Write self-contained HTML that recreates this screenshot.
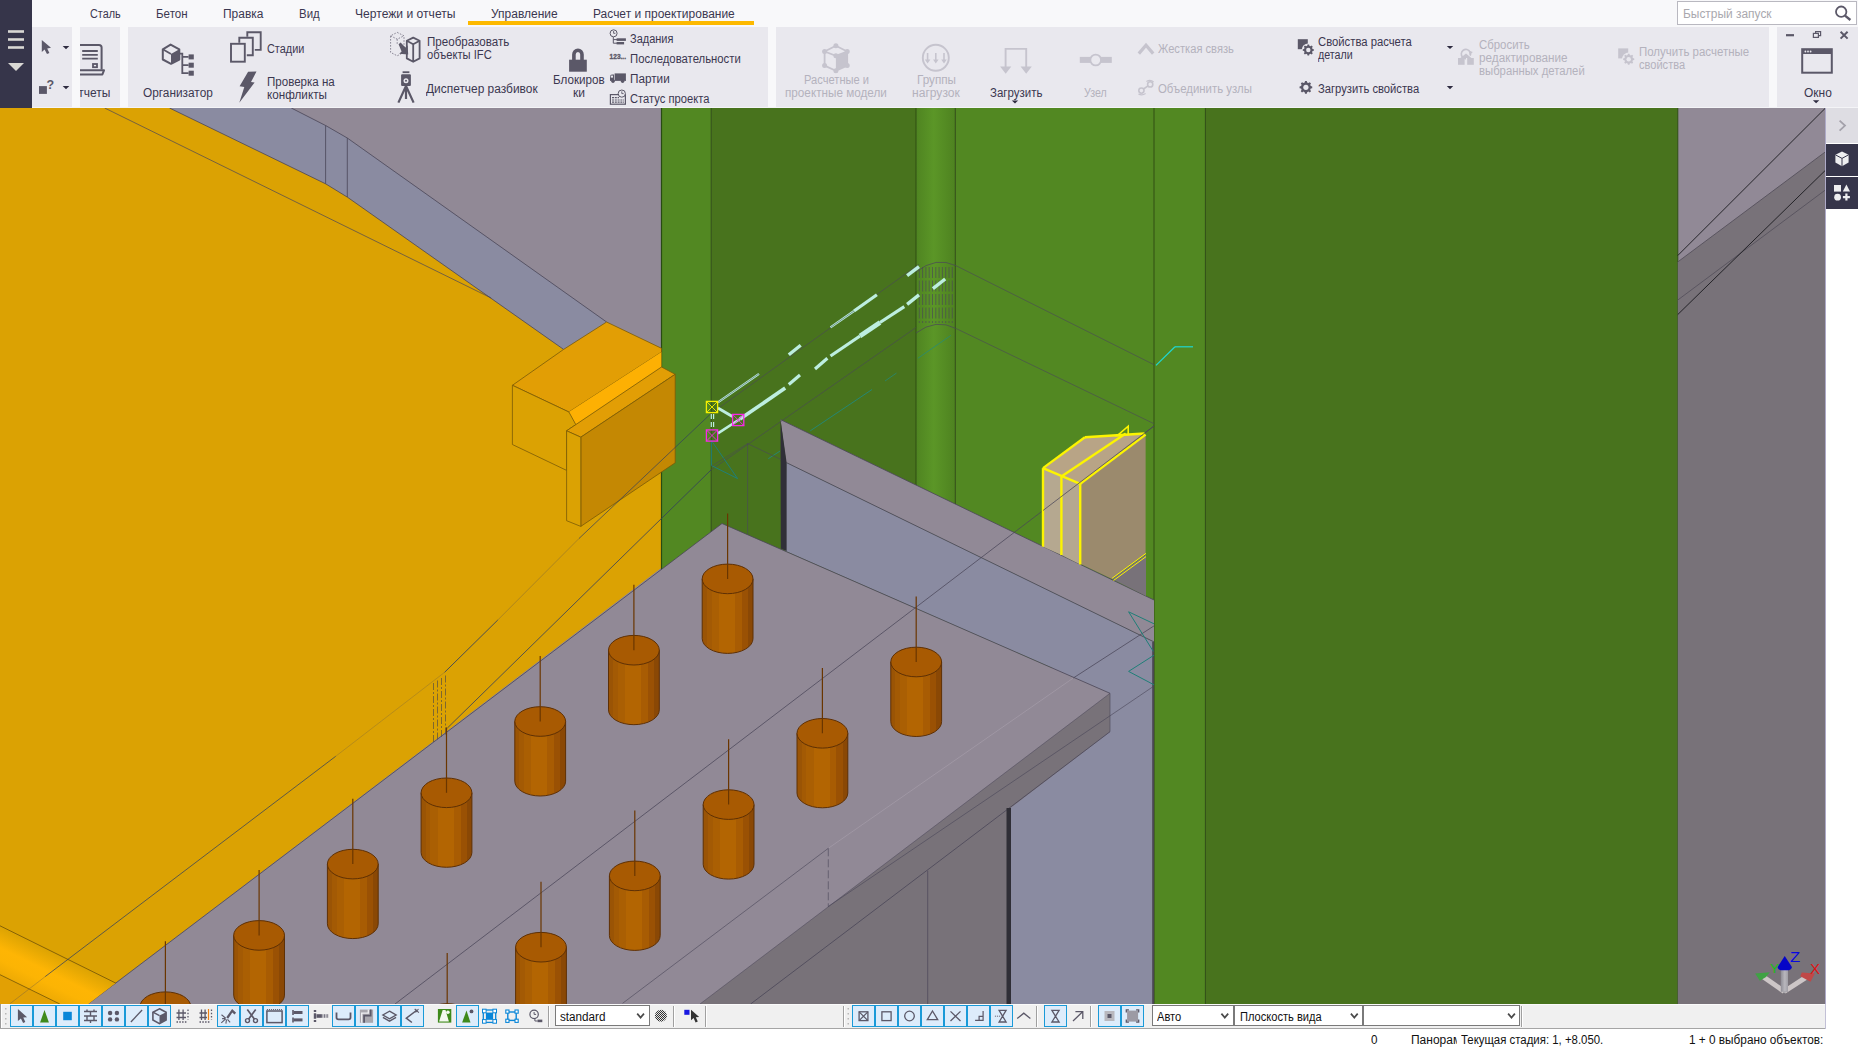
<!DOCTYPE html>
<html lang="ru"><head><meta charset="utf-8"><title>Tekla Structures</title>
<style>
html,body{margin:0;padding:0;background:#fff;}
body{width:1858px;height:1050px;position:relative;overflow:hidden;font-family:"Liberation Sans",sans-serif;font-size:12px;}
.t{position:absolute;white-space:nowrap;line-height:1.2;transform-origin:0 50%;}
.a{position:absolute;}
#tabs{left:0;top:0;width:1858px;height:27px;background:#f8f8fa;}
.rg{position:absolute;top:27px;height:80px;background:#e9e8ee;}
#strip{left:0;top:0;width:32px;height:108px;background:#36354a;}
#under{left:468px;top:21px;width:285.8px;height:4px;background:#fdb900;}
#search{left:1677px;top:1px;width:180px;height:24px;background:#fff;border:1px solid #b9b8c0;box-sizing:border-box;}
#ribline{left:0;top:107px;width:1858px;height:1px;background:#f4f4f7;}
#rp1{left:1826px;top:108px;width:32px;height:35px;background:#dedde3;}
#rp2{left:1826px;top:143.5px;width:32px;height:32px;background:#36354a;}
#rp3{left:1826px;top:176.5px;width:32px;height:32px;background:#36354a;}
#tbar{left:0;top:1004px;width:1826px;height:24px;background:#f0f0f0;border-bottom:1px solid #a5a5a5;}
.sel{position:absolute;top:1005px;height:21px;background:#fff;border:1px solid #7a7a7a;box-sizing:border-box;}
.b{position:absolute;top:1005px;height:22px;box-sizing:border-box;background:#ddecfb;border:1px solid #1a9ad8;}
</style></head><body>
<div id="tabs" class="a"></div>
<div class="rg" style="left:32px;width:40px"></div>
<div class="rg" style="left:80px;width:40px"></div>
<div class="rg" style="left:128px;width:640px"></div>
<div class="rg" style="left:776px;width:993px"></div>
<div class="rg" style="left:1777px;width:81px"></div>
<div class="a" style="left:72px;top:27px;width:8px;height:80px;background:#f8f8fa"></div>
<div class="a" style="left:120px;top:27px;width:8px;height:80px;background:#f8f8fa"></div>
<div class="a" style="left:768px;top:27px;width:8px;height:80px;background:#f8f8fa"></div>
<div class="a" style="left:1769px;top:27px;width:8px;height:80px;background:#f8f8fa"></div>
<div id="ribline" class="a"></div>
<div id="strip" class="a"></div>
<div id="under" class="a"></div>
<div id="search" class="a"></div>
<div id="rp1" class="a"></div><div id="rp2" class="a"></div><div id="rp3" class="a"></div>
<svg class="a" style="left:0;top:0" width="1858" height="1050" viewBox="0 0 1858 1050">
<defs>
<linearGradient id="gcyl" x1="0" x2="1" y1="0" y2="0"><stop offset="0" stop-color="#4f8421"/><stop offset="0.45" stop-color="#5b9627"/><stop offset="1" stop-color="#4e8220"/></linearGradient>
<linearGradient id="stud" x1="0" x2="1" y1="0" y2="0"><stop offset="0" stop-color="#9a5405"/><stop offset="0.092" stop-color="#9a5405"/><stop offset="0.092" stop-color="#a35a04"/><stop offset="0.184" stop-color="#a35a04"/><stop offset="0.184" stop-color="#aa5f03"/><stop offset="0.327" stop-color="#aa5f03"/><stop offset="0.327" stop-color="#b36502"/><stop offset="0.643" stop-color="#b36502"/><stop offset="0.643" stop-color="#a85c03"/><stop offset="0.776" stop-color="#a85c03"/><stop offset="0.776" stop-color="#9a5104"/><stop offset="0.898" stop-color="#9a5104"/><stop offset="0.898" stop-color="#8a4805"/><stop offset="1" stop-color="#8a4805"/></linearGradient>
<linearGradient id="yband" gradientUnits="userSpaceOnUse" x1="0" y1="925.8" x2="-19.4" y2="965.1"><stop offset="0" stop-color="#dca303"/><stop offset="0.18" stop-color="#e9aa03"/><stop offset="0.45" stop-color="#feb504"/><stop offset="0.7" stop-color="#fcb404"/><stop offset="1" stop-color="#eeaa04"/></linearGradient>
<linearGradient id="zsh" x1="0" x2="1" y1="0" y2="0"><stop offset="0" stop-color="#8f8d96"/><stop offset="0.55" stop-color="#b9b7bd"/><stop offset="1" stop-color="#a09ea6"/></linearGradient>
<clipPath id="sc"><rect x="0" y="108" width="1826" height="896"/></clipPath>
</defs>
<g clip-path="url(#sc)" shape-rendering="auto">
<rect x="0" y="108" width="1826" height="896" fill="#918996"/>
<polygon points="169.5,108.0 291.3,108.0 325.6,125.5 347.3,138.0 606.6,322.0 563.6,349.4 347.3,197.1 325.6,183.8" fill="#8a8ba1" />
<polygon points="0.0,108.0 169.5,108.0 325.6,183.8 347.3,197.1 563.6,349.4 661.5,349.4 661.5,567.8 88.1,1004.0 0.0,1004.0" fill="#dba203" />
<line x1="169.5" y1="108.0" x2="325.6" y2="183.8" stroke="#4a4658" stroke-width="1" stroke-opacity="0.8" />
<line x1="325.6" y1="183.8" x2="347.3" y2="197.1" stroke="#4a4658" stroke-width="1" stroke-opacity="0.8" />
<line x1="347.3" y1="197.1" x2="563.6" y2="349.4" stroke="#4a4658" stroke-width="1" stroke-opacity="0.8" />
<line x1="291.3" y1="108.0" x2="325.6" y2="125.5" stroke="#4a4658" stroke-width="1" stroke-opacity="0.8" />
<line x1="325.6" y1="125.5" x2="347.3" y2="138.0" stroke="#4a4658" stroke-width="1" stroke-opacity="0.8" />
<line x1="347.3" y1="138.0" x2="606.6" y2="322.0" stroke="#4a4658" stroke-width="1" stroke-opacity="0.8" />
<line x1="325.6" y1="125.5" x2="325.6" y2="183.8" stroke="#4a4658" stroke-width="1" stroke-opacity="0.8" />
<line x1="347.3" y1="138.0" x2="347.3" y2="197.1" stroke="#4a4658" stroke-width="1" stroke-opacity="0.8" />
<line x1="104.7" y1="108.0" x2="491.2" y2="298.0" stroke="#4a4658" stroke-width="1" stroke-opacity="0.7" />
<rect x="661.5" y="108" width="49.7" height="500" fill="#528822"/>
<rect x="711.2" y="108" width="205" height="500" fill="#48731d"/>
<rect x="916" y="108" width="39.3" height="560" fill="url(#gcyl)"/>
<rect x="955.3" y="108" width="199" height="560" fill="#528822"/>
<rect x="1154" y="108" width="51.4" height="896" fill="#528822"/>
<rect x="1205.4" y="108" width="472.4" height="896" fill="#48731d"/>
<line x1="711.2" y1="108.0" x2="711.2" y2="600.0" stroke="#2c4a12" stroke-width="1" stroke-opacity="0.9" />
<line x1="916.0" y1="108.0" x2="916.0" y2="600.0" stroke="#2c4a12" stroke-width="1" stroke-opacity="0.9" />
<line x1="955.3" y1="108.0" x2="955.3" y2="600.0" stroke="#2c4a12" stroke-width="1" stroke-opacity="0.9" />
<line x1="1154.0" y1="108.0" x2="1154.0" y2="1004.0" stroke="#2c4a12" stroke-width="1" stroke-opacity="0.9" />
<line x1="1205.4" y1="108.0" x2="1205.4" y2="1004.0" stroke="#2c4a12" stroke-width="1" stroke-opacity="0.9" />
<line x1="661.5" y1="108.0" x2="661.5" y2="570.0" stroke="#24480f" stroke-width="1.2" stroke-opacity="0.95" />
<line x1="1677.8" y1="108.0" x2="1677.8" y2="1004.0" stroke="#2c4a12" stroke-width="1" stroke-opacity="0.9" />
<polygon points="1677.8,261.9 1826.0,151.4 1826.0,1004.0 1677.8,1004.0" fill="#787279" />
<line x1="1677.8" y1="255.5" x2="1826.0" y2="107.5" stroke="#1a1a1e" stroke-width="0.9" />
<line x1="1677.8" y1="261.9" x2="1826.0" y2="151.4" stroke="#5a5560" stroke-width="1" />
<line x1="1677.8" y1="300.0" x2="1826.0" y2="189.5" stroke="#5a5560" stroke-width="1" />
<line x1="1677.8" y1="314.5" x2="1826.0" y2="169.7" stroke="#1a1a1e" stroke-width="0.9" />
<line x1="1825.5" y1="108.0" x2="1825.5" y2="1004.0" stroke="#aeaac8" stroke-width="1" />
<polygon points="780.5,419.6 1154.0,600.0 1154.0,641.9 786.2,462.5" fill="#918996" />
<polygon points="786.2,462.5 1154.0,641.9 1154.0,1004.0 1010.0,1004.0 1010.0,808.3 1110.0,731.7 1110.0,693.3 785.4,551.0" fill="#8a8ba1" />
<polygon points="780.5,419.6 786.6,462.5 786.6,551.0 780.8,548.4" fill="#302f38" />
<line x1="780.5" y1="419.6" x2="1154.0" y2="600.0" stroke="#4a4658" stroke-width="1" stroke-opacity="0.8" />
<line x1="786.2" y1="462.5" x2="1154.0" y2="641.9" stroke="#4a4658" stroke-width="1" stroke-opacity="0.8" />
<polygon points="722.0,523.5 1110.0,693.3 780.0,943.1 700.0,1004.0 88.1,1004.0" fill="#918996" />
<polygon points="1110.0,693.3 1110.0,731.7 1010.0,808.3 1010.0,1004.0 700.0,1004.0" fill="#787279" />
<line x1="722.0" y1="523.5" x2="1110.0" y2="693.3" stroke="#4a4658" stroke-width="1" stroke-opacity="0.8" />
<line x1="1110.0" y1="693.3" x2="1110.0" y2="731.7" stroke="#4a4658" stroke-width="1" stroke-opacity="0.6" />
<line x1="1110.0" y1="693.3" x2="700.0" y2="1004.0" stroke="#4a4658" stroke-width="1" stroke-opacity="0.5" />
<line x1="1110.0" y1="731.7" x2="750.6" y2="1004.0" stroke="#4a4658" stroke-width="1" stroke-opacity="0.8" />
<line x1="88.1" y1="1004.0" x2="722.0" y2="523.5" stroke="#4a4658" stroke-width="1" stroke-opacity="0.8" />
<line x1="927.7" y1="870.7" x2="927.7" y2="1004.0" stroke="#4a4658" stroke-width="1" stroke-opacity="0.7" />
<rect x="1006.5" y="808" width="4.5" height="196" fill="#2f2e36"/>
<line x1="1154.0" y1="426.0" x2="395.0" y2="1004.0" stroke="#4a4658" stroke-width="1" stroke-opacity="0.75" />
<line x1="1073.3" y1="678.0" x2="828.3" y2="848.3" stroke="#a59da9" stroke-width="1" stroke-opacity="0.7" />
<line x1="1154.3" y1="625.7" x2="1073.3" y2="678.0" stroke="#4a4658" stroke-width="1" stroke-opacity="0.75" />
<rect x="1152.2" y="642" width="2" height="362" fill="#4a4852"/>
<line x1="828.3" y1="848.3" x2="622.6" y2="1003.3" stroke="#4a4658" stroke-width="1" stroke-opacity="0.6" />
<line x1="828.3" y1="848.3" x2="828.3" y2="906.7" stroke="#4a4658" stroke-width="1" stroke-opacity="0.6" stroke-dasharray="8 3"/>
<line x1="1153.0" y1="686.7" x2="828.0" y2="906.7" stroke="#4a4658" stroke-width="1" stroke-opacity="0.6" />
<polygon points="563.6,349.4 606.6,322.0 661.5,348.3 661.5,352.1 568.9,412.0 512.4,385.3" fill="#e29e05" stroke="#7a5a08" stroke-width="0.8" />
<polygon points="568.9,412.0 661.5,352.1 661.5,367.0 575.8,424.6" fill="#fdb003" />
<polygon points="512.4,385.3 568.9,412.0 575.8,424.6 566.6,430.8 566.6,470.4 512.4,444.5" fill="#dba203" stroke="#7a5a08" stroke-width="0.8" />
<polygon points="566.6,430.8 661.5,367.0 675.2,374.3 580.8,437.2" fill="#e29e05" stroke="#7a5a08" stroke-width="0.8" />
<polygon points="580.8,437.2 675.2,374.3 675.2,462.8 580.8,526.4" fill="#c48803" stroke="#7a5a08" stroke-width="0.8" />
<polygon points="566.6,430.8 580.8,437.2 580.8,526.4 566.6,520.7" fill="#dba203" stroke="#7a5a08" stroke-width="0.8" />
<path d="M702.2,578.9 L702.2,638.6 A25.4,14.8 0 0 0 753.0,638.6 L753.0,578.9 Z" fill="url(#stud)" stroke="#5e3005" stroke-width="1"/>
<ellipse cx="727.6" cy="578.9" rx="25.4" ry="14.8" fill="#a85a02" stroke="#5e3005" stroke-width="1"/>
<line x1="727.6" y1="513.5" x2="727.6" y2="578.9" stroke="#6a3600" stroke-width="1.2" />
<path d="M608.5,650.2 L608.5,709.9 A25.4,14.8 0 0 0 659.3,709.9 L659.3,650.2 Z" fill="url(#stud)" stroke="#5e3005" stroke-width="1"/>
<ellipse cx="633.9" cy="650.2" rx="25.4" ry="14.8" fill="#a85a02" stroke="#5e3005" stroke-width="1"/>
<line x1="633.9" y1="584.8" x2="633.9" y2="650.2" stroke="#6a3600" stroke-width="1.2" />
<path d="M890.8,662.0 L890.8,721.7 A25.4,14.8 0 0 0 941.6,721.7 L941.6,662.0 Z" fill="url(#stud)" stroke="#5e3005" stroke-width="1"/>
<ellipse cx="916.2" cy="662.0" rx="25.4" ry="14.8" fill="#a85a02" stroke="#5e3005" stroke-width="1"/>
<line x1="916.2" y1="596.6" x2="916.2" y2="662.0" stroke="#6a3600" stroke-width="1.2" />
<path d="M514.8,721.5 L514.8,781.2 A25.4,14.8 0 0 0 565.6,781.2 L565.6,721.5 Z" fill="url(#stud)" stroke="#5e3005" stroke-width="1"/>
<ellipse cx="540.2" cy="721.5" rx="25.4" ry="14.8" fill="#a85a02" stroke="#5e3005" stroke-width="1"/>
<line x1="540.2" y1="656.1" x2="540.2" y2="721.5" stroke="#6a3600" stroke-width="1.2" />
<path d="M797.0,733.3 L797.0,793.0 A25.4,14.8 0 0 0 847.8,793.0 L847.8,733.3 Z" fill="url(#stud)" stroke="#5e3005" stroke-width="1"/>
<ellipse cx="822.4" cy="733.3" rx="25.4" ry="14.8" fill="#a85a02" stroke="#5e3005" stroke-width="1"/>
<line x1="822.4" y1="667.9" x2="822.4" y2="733.3" stroke="#6a3600" stroke-width="1.2" />
<path d="M421.1,792.8 L421.1,852.5 A25.4,14.8 0 0 0 471.9,852.5 L471.9,792.8 Z" fill="url(#stud)" stroke="#5e3005" stroke-width="1"/>
<ellipse cx="446.5" cy="792.8" rx="25.4" ry="14.8" fill="#a85a02" stroke="#5e3005" stroke-width="1"/>
<line x1="446.5" y1="727.4" x2="446.5" y2="792.8" stroke="#6a3600" stroke-width="1.2" />
<path d="M703.2,804.6 L703.2,864.3 A25.4,14.8 0 0 0 754.0,864.3 L754.0,804.6 Z" fill="url(#stud)" stroke="#5e3005" stroke-width="1"/>
<ellipse cx="728.6" cy="804.6" rx="25.4" ry="14.8" fill="#a85a02" stroke="#5e3005" stroke-width="1"/>
<line x1="728.6" y1="739.2" x2="728.6" y2="804.6" stroke="#6a3600" stroke-width="1.2" />
<path d="M327.4,864.1 L327.4,923.8 A25.4,14.8 0 0 0 378.2,923.8 L378.2,864.1 Z" fill="url(#stud)" stroke="#5e3005" stroke-width="1"/>
<ellipse cx="352.8" cy="864.1" rx="25.4" ry="14.8" fill="#a85a02" stroke="#5e3005" stroke-width="1"/>
<line x1="352.8" y1="798.7" x2="352.8" y2="864.1" stroke="#6a3600" stroke-width="1.2" />
<path d="M609.4,875.9 L609.4,935.6 A25.4,14.8 0 0 0 660.2,935.6 L660.2,875.9 Z" fill="url(#stud)" stroke="#5e3005" stroke-width="1"/>
<ellipse cx="634.8" cy="875.9" rx="25.4" ry="14.8" fill="#a85a02" stroke="#5e3005" stroke-width="1"/>
<line x1="634.8" y1="810.5" x2="634.8" y2="875.9" stroke="#6a3600" stroke-width="1.2" />
<path d="M233.7,935.4 L233.7,995.1 A25.4,14.8 0 0 0 284.5,995.1 L284.5,935.4 Z" fill="url(#stud)" stroke="#5e3005" stroke-width="1"/>
<ellipse cx="259.1" cy="935.4" rx="25.4" ry="14.8" fill="#a85a02" stroke="#5e3005" stroke-width="1"/>
<line x1="259.1" y1="870.0" x2="259.1" y2="935.4" stroke="#6a3600" stroke-width="1.2" />
<path d="M515.6,947.2 L515.6,1006.9 A25.4,14.8 0 0 0 566.4,1006.9 L566.4,947.2 Z" fill="url(#stud)" stroke="#5e3005" stroke-width="1"/>
<ellipse cx="541.0" cy="947.2" rx="25.4" ry="14.8" fill="#a85a02" stroke="#5e3005" stroke-width="1"/>
<line x1="541.0" y1="881.8" x2="541.0" y2="947.2" stroke="#6a3600" stroke-width="1.2" />
<path d="M140.0,1006.7 L140.0,1066.4 A25.4,14.8 0 0 0 190.8,1066.4 L190.8,1006.7 Z" fill="url(#stud)" stroke="#5e3005" stroke-width="1"/>
<ellipse cx="165.4" cy="1006.7" rx="25.4" ry="14.8" fill="#a85a02" stroke="#5e3005" stroke-width="1"/>
<line x1="165.4" y1="941.3" x2="165.4" y2="1006.7" stroke="#6a3600" stroke-width="1.2" />
<path d="M421.8,1018.5 L421.8,1078.2 A25.4,14.8 0 0 0 472.6,1078.2 L472.6,1018.5 Z" fill="url(#stud)" stroke="#5e3005" stroke-width="1"/>
<ellipse cx="447.2" cy="1018.5" rx="25.4" ry="14.8" fill="#a85a02" stroke="#5e3005" stroke-width="1"/>
<line x1="447.2" y1="953.1" x2="447.2" y2="1018.5" stroke="#6a3600" stroke-width="1.2" />
<polygon points="1080.2,483.8 1145.6,434.6 1145.6,554.0 1112.1,579.1 1080.2,563.8" fill="#9b8a6d" />
<polygon points="1043.0,468.1 1084.9,437.3 1144.6,433.5 1080.2,483.8" fill="#b8a486" />
<polygon points="1043.0,468.1 1061.4,476.5 1061.4,555.0 1043.0,546.7" fill="#b5a890" />
<polygon points="1061.4,476.5 1080.2,483.8 1080.2,564.5 1061.4,555.0" fill="#b5a890" />
<polygon points="1112.1,579.1 1146.0,554.6 1146.0,595.9" fill="#787279" />
<line x1="1043.0" y1="468.1" x2="1043.0" y2="546.7" stroke="#fcf400" stroke-width="2.4" />
<line x1="1061.4" y1="476.5" x2="1061.4" y2="555.0" stroke="#fcf400" stroke-width="2.4" />
<line x1="1080.2" y1="483.8" x2="1080.2" y2="564.5" stroke="#fcf400" stroke-width="2.4" />
<line x1="1043.0" y1="468.1" x2="1080.2" y2="483.8" stroke="#fcf400" stroke-width="2.4" />
<line x1="1043.0" y1="468.1" x2="1084.9" y2="437.3" stroke="#fcf400" stroke-width="2.4" />
<line x1="1084.9" y1="437.3" x2="1144.6" y2="433.5" stroke="#fcf400" stroke-width="2.4" />
<line x1="1061.4" y1="476.5" x2="1125.7" y2="433.5" stroke="#fcf400" stroke-width="2.4" />
<line x1="1080.2" y1="483.8" x2="1145.6" y2="434.6" stroke="#fcf400" stroke-width="2.4" />
<polygon points="1117.3,435.6 1128.2,426.2 1128.2,434.5" fill="none" stroke="#fcf400" stroke-width="1.6" />
<line x1="1112.1" y1="578.3" x2="1146.0" y2="553.4" stroke="#fcf400" stroke-width="1" />
<line x1="1113.5" y1="580.5" x2="1146.0" y2="556.6" stroke="#fcf400" stroke-width="1" />
<line x1="1154.0" y1="426.0" x2="1043.0" y2="510.5" stroke="#4a4658" stroke-width="1" stroke-opacity="0.75" />
<line x1="711.0" y1="413.5" x2="919.0" y2="264.3" stroke="#4a4658" stroke-width="1" stroke-opacity="0.6" />
<line x1="711.0" y1="413.5" x2="578.9" y2="538.6" stroke="#33405e" stroke-width="1" stroke-opacity="0.7" />
<line x1="578.9" y1="538.6" x2="497.8" y2="620.0" stroke="#4a4658" stroke-width="1" stroke-opacity="0.3" />
<line x1="497.8" y1="620.0" x2="444.6" y2="672.3" stroke="#33405e" stroke-width="1" stroke-opacity="0.85" />
<line x1="711.0" y1="470.0" x2="916.2" y2="327.4" stroke="#4a4658" stroke-width="1" stroke-opacity="0.6" />
<line x1="711.0" y1="470.0" x2="447.4" y2="728.0" stroke="#33405e" stroke-width="1" stroke-opacity="0.8" />
<path d="M916,272 Q936,256 956,265.7" fill="none" stroke="#4a4658" stroke-opacity="0.7"/>
<path d="M916,333 Q936,318 956,328.5" fill="none" stroke="#4a4658" stroke-opacity="0.7"/>
<line x1="919.3" y1="267.0" x2="919.3" y2="323.0" stroke="#4a4658" stroke-width="0.9" stroke-opacity="0.7" stroke-dasharray="11 2.5"/>
<line x1="922.6" y1="267.0" x2="922.6" y2="323.0" stroke="#4a4658" stroke-width="0.9" stroke-opacity="0.7" stroke-dasharray="11 2.5"/>
<line x1="925.9" y1="267.0" x2="925.9" y2="323.0" stroke="#4a4658" stroke-width="0.9" stroke-opacity="0.7" stroke-dasharray="11 2.5"/>
<line x1="929.2" y1="267.0" x2="929.2" y2="323.0" stroke="#4a4658" stroke-width="0.9" stroke-opacity="0.7" stroke-dasharray="11 2.5"/>
<line x1="932.5" y1="267.0" x2="932.5" y2="323.0" stroke="#4a4658" stroke-width="0.9" stroke-opacity="0.7" stroke-dasharray="11 2.5"/>
<line x1="935.8" y1="267.0" x2="935.8" y2="323.0" stroke="#4a4658" stroke-width="0.9" stroke-opacity="0.7" stroke-dasharray="11 2.5"/>
<line x1="939.1" y1="267.0" x2="939.1" y2="323.0" stroke="#4a4658" stroke-width="0.9" stroke-opacity="0.7" stroke-dasharray="11 2.5"/>
<line x1="942.4" y1="267.0" x2="942.4" y2="323.0" stroke="#4a4658" stroke-width="0.9" stroke-opacity="0.7" stroke-dasharray="11 2.5"/>
<line x1="945.7" y1="267.0" x2="945.7" y2="323.0" stroke="#4a4658" stroke-width="0.9" stroke-opacity="0.7" stroke-dasharray="11 2.5"/>
<line x1="949.0" y1="267.0" x2="949.0" y2="323.0" stroke="#4a4658" stroke-width="0.9" stroke-opacity="0.7" stroke-dasharray="11 2.5"/>
<line x1="952.3" y1="267.0" x2="952.3" y2="323.0" stroke="#4a4658" stroke-width="0.9" stroke-opacity="0.7" stroke-dasharray="11 2.5"/>
<line x1="956.0" y1="265.7" x2="1154.0" y2="364.7" stroke="#4a4658" stroke-width="1" stroke-opacity="0.6" />
<line x1="956.0" y1="328.5" x2="1154.0" y2="423.7" stroke="#4a4658" stroke-width="1" stroke-opacity="0.6" />
<line x1="1156.0" y1="365.4" x2="1175.0" y2="346.8" stroke="#1fd8d2" stroke-width="1.2" />
<line x1="1175.0" y1="346.8" x2="1193.0" y2="346.8" stroke="#1fd8d2" stroke-width="1.2" />
<line x1="785.2" y1="386.9" x2="959.0" y2="285.8" stroke="#1f7f78" stroke-width="1" stroke-opacity="0.0" />
<line x1="768.3" y1="458.7" x2="780.1" y2="451.0" stroke="#1f8a80" stroke-width="1" stroke-opacity="0.85" />
<line x1="810.2" y1="430.9" x2="872.0" y2="389.5" stroke="#1f8a80" stroke-width="1" stroke-opacity="0.85" />
<line x1="885.0" y1="381.0" x2="959.0" y2="329.8" stroke="#1f8a80" stroke-width="1" stroke-opacity="0.7" stroke-dasharray="14 26 40 20"/>
<polygon points="711.4,440.5 737.6,478.6 711.4,465.5" fill="none" stroke="#1f7f78" stroke-width="1" />
<line x1="747.6" y1="443.0" x2="747.6" y2="534.0" stroke="#4a4658" stroke-width="1" stroke-opacity="0.6" />
<line x1="711.4" y1="466.2" x2="747.6" y2="443.6" stroke="#4a4658" stroke-width="1" stroke-opacity="0.5" />
<line x1="747.6" y1="443.6" x2="781.0" y2="459.5" stroke="#4a4658" stroke-width="1" stroke-opacity="0.6" />
<path d="M1128.6,611.8 L1154,623.8 M1128.6,611.8 L1153.3,651.4 M1128.6,671.4 L1154,655.2 M1128.6,671.4 L1154,684.8" fill="none" stroke="#1f7f78" stroke-width="1"/>
<line x1="717.9" y1="402.4" x2="759.0" y2="373.8" stroke="#bdeee0" stroke-width="2.2" />
<line x1="717.9" y1="402.4" x2="759.0" y2="373.8" stroke="#58706a" stroke-width="0.7" />
<line x1="788.8" y1="354.8" x2="800.7" y2="345.2" stroke="#bdeee0" stroke-width="3.4" />
<line x1="830.5" y1="327.4" x2="854.0" y2="311.0" stroke="#bdeee0" stroke-width="2.2" />
<line x1="830.5" y1="327.4" x2="854.0" y2="311.0" stroke="#58706a" stroke-width="0.7" />
<line x1="854.0" y1="311.0" x2="876.9" y2="294.8" stroke="#bdeee0" stroke-width="3.2" />
<line x1="907.1" y1="275.7" x2="919.0" y2="266.7" stroke="#bdeee0" stroke-width="3.4" />
<line x1="717.9" y1="433.3" x2="740.0" y2="419.0" stroke="#bdeee0" stroke-width="2.6" />
<line x1="740.0" y1="419.0" x2="785.2" y2="388.1" stroke="#bdeee0" stroke-width="3.6" />
<line x1="788.8" y1="384.5" x2="800.0" y2="375.0" stroke="#bdeee0" stroke-width="3.2" />
<line x1="815.0" y1="369.0" x2="827.4" y2="358.3" stroke="#bdeee0" stroke-width="3.2" />
<line x1="830.5" y1="356.0" x2="860.0" y2="336.0" stroke="#bdeee0" stroke-width="3.2" />
<line x1="860.0" y1="336.0" x2="880.0" y2="322.5" stroke="#bdeee0" stroke-width="4.6" />
<line x1="880.0" y1="322.5" x2="904.3" y2="306.7" stroke="#bdeee0" stroke-width="3.2" />
<line x1="907.1" y1="304.3" x2="919.0" y2="294.8" stroke="#bdeee0" stroke-width="3.4" />
<line x1="932.9" y1="288.6" x2="945.2" y2="279.0" stroke="#bdeee0" stroke-width="3.4" />
<line x1="717.9" y1="408.0" x2="732.4" y2="416.5" stroke="#bdeee0" stroke-width="3" />
<line x1="711.3" y1="414.0" x2="711.3" y2="429.0" stroke="#bdeee0" stroke-width="1.2" stroke-dasharray="5 3"/>
<line x1="713.6" y1="414.0" x2="713.6" y2="429.0" stroke="#bdeee0" stroke-width="1.2" stroke-dasharray="5 3"/>
<rect x="706.4" y="401.4" width="11.2" height="11.2" fill="none" stroke="#f5f000" stroke-width="1.3"/>
<line x1="706.4" y1="401.4" x2="717.6" y2="412.6" stroke="#f5f000" stroke-width="0.9" />
<line x1="706.4" y1="412.6" x2="717.6" y2="401.4" stroke="#f5f000" stroke-width="0.9" />
<rect x="732.6" y="414.4" width="11.2" height="11.2" fill="none" stroke="#f828e8" stroke-width="1.3"/>
<line x1="732.6" y1="414.4" x2="743.8" y2="425.6" stroke="#f828e8" stroke-width="0.9" />
<line x1="732.6" y1="425.6" x2="743.8" y2="414.4" stroke="#f828e8" stroke-width="0.9" />
<rect x="706.4" y="429.9" width="11.2" height="11.2" fill="none" stroke="#f828e8" stroke-width="1.3"/>
<line x1="706.4" y1="429.9" x2="717.6" y2="441.1" stroke="#f828e8" stroke-width="0.9" />
<line x1="706.4" y1="441.1" x2="717.6" y2="429.9" stroke="#f828e8" stroke-width="0.9" />
<line x1="433.5" y1="683.0" x2="433.5" y2="742.0" stroke="#5a5040" stroke-width="0.9" stroke-opacity="0.8" stroke-dasharray="7 2 2 2"/>
<line x1="437.5" y1="680.5" x2="437.5" y2="739.5" stroke="#5a5040" stroke-width="0.9" stroke-opacity="0.8" stroke-dasharray="7 2 2 2"/>
<line x1="441.5" y1="678.0" x2="441.5" y2="737.0" stroke="#5a5040" stroke-width="0.9" stroke-opacity="0.8" stroke-dasharray="7 2 2 2"/>
<line x1="445.5" y1="675.5" x2="445.5" y2="734.5" stroke="#5a5040" stroke-width="0.9" stroke-opacity="0.8" stroke-dasharray="7 2 2 2"/>
<polygon points="0.0,925.8 115.8,983.1 88.3,1004.0 59.8,1004.0 0.0,974.7" fill="url(#yband)" />
<polygon points="0.0,974.7 59.8,1004.0 0.0,1004.0" fill="#e2a004" />
<line x1="0.0" y1="925.8" x2="115.8" y2="983.1" stroke="#6a4e08" stroke-width="0.9" stroke-opacity="0.85" />
<line x1="0.0" y1="974.7" x2="59.8" y2="1004.0" stroke="#6a4e08" stroke-width="0.9" stroke-opacity="0.8" />
<line x1="444.6" y1="672.3" x2="335.7" y2="756.3" stroke="#4a4658" stroke-width="1" stroke-opacity="0.25" />
<line x1="335.7" y1="756.3" x2="45.2" y2="976.6" stroke="#33405e" stroke-width="1" stroke-opacity="0.75" />
<line x1="45.2" y1="976.6" x2="9.9" y2="1003.8" stroke="#4a4658" stroke-width="1" stroke-opacity="0.3" />
<g>
<line x1="1784.2" y1="991.5" x2="1763.5" y2="977" stroke="#cdc6c7" stroke-width="5"/>
<line x1="1784.2" y1="991.5" x2="1805.6" y2="977.7" stroke="#cdc6c7" stroke-width="5"/>
<rect x="1780.8" y="969" width="7.2" height="23" fill="url(#zsh)"/>
<path d="M1784.4,993.2 L1780.8,991 H1788 Z" fill="#aaa8ae"/>
<polygon points="1755.2,973.4 1769.7,972.2 1766,977 1759.8,980.8" fill="#3fa244"/>
<polygon points="1801.8,972.4 1814.9,973.4 1810.5,981.8 1800.3,976.2" fill="#c04848"/>
<path d="M1784.7,956 L1791.6,966.5 Q1792.6,969.2 1789,970.2 H1780.6 Q1777,969.2 1778,966.5 Z" fill="#0505c8"/>
<text x="1790" y="961.7" font-family="Liberation Sans, sans-serif" font-size="15" fill="#0808e0" textLength="10.2" lengthAdjust="spacingAndGlyphs">Z</text>
<text x="1770" y="972.8" font-family="Liberation Sans, sans-serif" font-size="13.4" fill="#14c014">Y</text>
<text x="1810" y="973.7" font-family="Liberation Sans, sans-serif" font-size="15" fill="#e01414">X</text>
</g>
</g>
<defs><clipPath id="rc"><rect x="80" y="27" width="40" height="80"/></clipPath></defs>
<rect x="8" y="30.2" width="16" height="2.6" fill="#d9d8d4"/>
<rect x="8" y="38.2" width="16" height="2.6" fill="#d9d8d4"/>
<rect x="8" y="46.2" width="16" height="2.6" fill="#d9d8d4"/>
<path d="M8,63 H24 L16,71 Z" fill="#d9d8d4"/>
<path d="M41.8,40 L41.8,51.9 L44.6,49.6 L47,54 L49.4,52.9 L47.2,48.6 L51,47.7 Z" fill="#5b5868"/>
<path d="M62.7,46.1 H69.3 L66,49.2 Z" fill="#2e2b40"/>
<path d="M62.7,86.1 H69.3 L66,89.2 Z" fill="#2e2b40"/>
<rect x="39" y="86.1" width="7.9" height="7.8" fill="#5b5868"/>
<text x="46.6" y="88.6" font-family="Liberation Sans, sans-serif" font-weight="bold" font-size="12.5" fill="#5b5868">?</text>
<g clip-path="url(#rc)"><path d="M74,45 H99 Q101.6,45 101.6,47.6 V69.5" fill="none" stroke="#5b5868" stroke-width="2"/><path d="M82.2,51 H97.8 M82.2,54.8 H97.8 M82.2,58.6 H97.8" stroke="#5b5868" stroke-width="1.8"/><rect x="93" y="64" width="4" height="3.2" fill="none" stroke="#5b5868" stroke-width="1.8"/><path d="M78.6,70.3 H104 L102.4,74.4 H76.6 Z" fill="none" stroke="#5b5868" stroke-width="2" stroke-linejoin="round"/></g>
<path d="M170.6,44.6 L179.3,49.3 L179.3,59.5 L171,63.8 L162.8,59.5 L162.8,49.3 Z" fill="#e9e8ee" stroke="#5b5868" stroke-width="2" stroke-linejoin="round"/>
<path d="M171,54 L179.3,49.3 L179.3,59.5 L171,63.8 Z" fill="#5b5868"/><path d="M162.8,49.3 L171,54" stroke="#5b5868" stroke-width="1.8"/>
<path d="M179.3,53.7 H182.3 V73.2 H188.6 M182.3,56.9 H188.6 M182.3,65.2 H188.6" fill="none" stroke="#5b5868" stroke-width="1.8"/>
<rect x="188.6" y="54.4" width="5.2" height="5" fill="#5b5868"/>
<rect x="188.6" y="62.7" width="5.2" height="5" fill="#5b5868"/>
<rect x="188.6" y="70.7" width="5.2" height="5" fill="#5b5868"/>
<path d="M247.3,36.8 V32.3 H260.7 V49.9 H254.8" fill="none" stroke="#5b5868" stroke-width="1.9"/><path d="M239.3,42.8 V37.8 H252.8 V55.3 H246.8" fill="none" stroke="#5b5868" stroke-width="1.9"/><rect x="231" y="43.8" width="13.8" height="17.9" fill="none" stroke="#5b5868" stroke-width="1.9"/>
<path d="M248.1,71.7 L256.5,71.5 L251,82 L254.6,82.6 L239.3,102.8 L244.3,87 L239.6,86.3 Z" fill="#5b5868"/>
<path d="M397.2,32.4 L404,35.8 L404,52.4 L397.2,55.8 L390.6,52.4 L390.6,35.8 Z M390.6,35.8 L397.2,39.2 L404,35.8 M397.2,39.2 V45" fill="none" stroke="#8a8796" stroke-width="1" stroke-dasharray="1.6 1.4"/>
<path d="M398.6,44.2 L400.6,42.4 L405.4,47.6 L407.6,45.4 L408.2,54.6 L399.2,53.8 L401.6,51.4 Z" fill="#5b5868"/>
<path d="M413.2,37.6 L419.6,40.8 L419.6,58.4 L413.2,61.8 L406.8,58.4 L406.8,40.8 Z M406.8,40.8 L413.2,44.2 L419.6,40.8 M413.2,44.2 V61.8" fill="none" stroke="#5b5868" stroke-width="1.8" stroke-linejoin="round"/>
<path d="M402.6,72.2 H409.4" stroke="#5b5868" stroke-width="1.8"/><rect x="401.1" y="74.2" width="9.8" height="11.8" rx="1" fill="#5b5868"/><circle cx="406" cy="80.8" r="2.5" fill="#e9e8ee"/><circle cx="406" cy="80.8" r="1" fill="#5b5868"/>
<path d="M406,86 L398.4,102.6 M406,86 L413.6,102.6 M406,86 V99" stroke="#5b5868" stroke-width="2.2" fill="none"/>
<rect x="569.1" y="59.7" width="17.7" height="12" fill="#5b5868"/><path d="M573.9,60 V54.6 A4.05,4.4 0 0 1 582,54.6 V60" fill="none" stroke="#5b5868" stroke-width="3.6"/>
<circle cx="613.6" cy="33.3" r="3.5" fill="none" stroke="#5b5868" stroke-width="1"/><path d="M613.6,31 V33.3 H615.4" fill="none" stroke="#5b5868" stroke-width="0.9"/><path d="M613.3,37 V43.2 H617 M613.3,39.6 H617" fill="none" stroke="#5b5868" stroke-width="1"/><rect x="616.6" y="38.3" width="9.3" height="2.6" fill="#5b5868"/><rect x="616.6" y="42" width="7.5" height="2.4" fill="#5b5868"/>
<text x="609.6" y="59.2" font-family="Liberation Sans, sans-serif" font-weight="bold" font-size="6.8" fill="#5b5868" stroke="#5b5868" stroke-width="0.35" textLength="16.4" lengthAdjust="spacingAndGlyphs">123...</text>
<rect x="614.6" y="73.4" width="11.3" height="6.6" fill="#5b5868"/><path d="M610,80 V76.6 Q610,74.6 612,74.6 H614 V80 Z" fill="#5b5868"/><rect x="610.8" y="75.6" width="2.2" height="2" fill="#e9e8ee"/><circle cx="613" cy="81.3" r="1.7" fill="#5b5868"/><circle cx="622.6" cy="81.3" r="1.7" fill="#5b5868"/><path d="M610,80.4 H626" stroke="#5b5868" stroke-width="1"/>
<rect x="610.4" y="94.6" width="15" height="9.6" fill="none" stroke="#5b5868" stroke-width="1.2"/><path d="M612,97.6 H619 M612,100 H624 M612,102.2 H624" stroke="#5b5868" stroke-width="1.2" stroke-dasharray="2 0.8"/><circle cx="621.8" cy="93.6" r="3.6" fill="#e9e8ee" stroke="#5b5868" stroke-width="1"/><path d="M621.8,91.4 V93.6 H623.6" fill="none" stroke="#5b5868" stroke-width="0.9"/>
<path d="M835.9,45.8 L847.2,51.5 L847.2,65.6 L835.9,70.7 L824.6,65.6 L824.6,51.5 Z M824.6,51.5 L835.9,55.8 L847.2,51.5" fill="none" stroke="#c6c4ce" stroke-width="1.8"/><path d="M835.9,55.8 L847.2,51.5 L847.2,65.6 L835.9,70.7 Z" fill="#c6c4ce"/>
<circle cx="835.9" cy="45.8" r="2.5" fill="#c6c4ce"/>
<circle cx="824.6" cy="51.5" r="2.5" fill="#c6c4ce"/>
<circle cx="847.2" cy="51.5" r="2.5" fill="#c6c4ce"/>
<circle cx="824.6" cy="65.6" r="2.5" fill="#c6c4ce"/>
<circle cx="847.2" cy="65.6" r="2.5" fill="#c6c4ce"/>
<circle cx="835.9" cy="70.7" r="2.5" fill="#c6c4ce"/>
<circle cx="835.9" cy="55.8" r="2.5" fill="#c6c4ce"/>
<circle cx="935.8" cy="57.8" r="13" fill="none" stroke="#c6c4ce" stroke-width="1.9"/>
<path d="M927.6,53 V61" stroke="#c6c4ce" stroke-width="1.6"/><path d="M924.8000000000001,59.4 H930.4 L927.6,63.6 Z" fill="#c6c4ce"/>
<path d="M935.8,53 V61" stroke="#c6c4ce" stroke-width="1.6"/><path d="M933.0,59.4 H938.5999999999999 L935.8,63.6 Z" fill="#c6c4ce"/>
<path d="M944,53 V61" stroke="#c6c4ce" stroke-width="1.6"/><path d="M941.2,59.4 H946.8 L944,63.6 Z" fill="#c6c4ce"/>
<path d="M1005.6,67 V48.9 H1026.2 V67" fill="none" stroke="#c6c4ce" stroke-width="1.9"/><path d="M1000.1,66.6 H1011.3 L1005.7,73.8 Z M1020.6,66.6 H1031.8 L1026.2,73.8 Z" fill="#c6c4ce"/>
<path d="M1011.8,100.4 H1018.2 L1015,103.4 Z" fill="#2e2b40"/>
<rect x="1079.8" y="56.9" width="32" height="6" fill="#c6c4ce"/><circle cx="1095.7" cy="60" r="5.4" fill="#e9e8ee" stroke="#c6c4ce" stroke-width="1.9"/>
<path d="M1138.8,53.6 L1146,45.2 L1153.2,53.6" fill="none" stroke="#c6c4ce" stroke-width="3.2" stroke-linejoin="miter"/>
<circle cx="1141.4" cy="90.6" r="2.6" fill="none" stroke="#c6c4ce" stroke-width="1.6"/><circle cx="1150.2" cy="84.4" r="2.6" fill="none" stroke="#c6c4ce" stroke-width="1.6"/><path d="M1143.5,89 L1148,85.8" stroke="#c6c4ce" stroke-width="1.6"/><path d="M1146.4,81.4 Q1150.5,79 1153.6,82 M1138.4,94 Q1142,96 1145.6,93.6" fill="none" stroke="#c6c4ce" stroke-width="1.2"/>
<rect x="1297.8" y="39.2" width="10" height="10" fill="#5b5868"/><circle cx="1308.3" cy="50" r="6.6" fill="#e9e8ee"/>
<polygon points="1313.85,49.22 1313.85,50.78 1312.53,51.09 1312.06,52.22 1312.77,53.37 1311.67,54.47 1310.52,53.76 1309.39,54.23 1309.08,55.55 1307.52,55.55 1307.21,54.23 1306.08,53.76 1304.93,54.47 1303.83,53.37 1304.54,52.22 1304.07,51.09 1302.75,50.78 1302.75,49.22 1304.07,48.91 1304.54,47.78 1303.83,46.63 1304.93,45.53 1306.08,46.24 1307.21,45.77 1307.52,44.45 1309.08,44.45 1309.39,45.77 1310.52,46.24 1311.67,45.53 1312.77,46.63 1312.06,47.78 1312.53,48.91" fill="#5b5868"/><circle cx="1308.3" cy="50" r="2.2" fill="#e9e8ee"/>
<polygon points="1312.24,86.41 1312.24,88.19 1310.73,88.55 1310.20,89.84 1311.01,91.15 1309.75,92.41 1308.44,91.60 1307.15,92.13 1306.79,93.64 1305.01,93.64 1304.65,92.13 1303.36,91.60 1302.05,92.41 1300.79,91.15 1301.60,89.84 1301.07,88.55 1299.56,88.19 1299.56,86.41 1301.07,86.05 1301.60,84.76 1300.79,83.45 1302.05,82.19 1303.36,83.00 1304.65,82.47 1305.01,80.96 1306.79,80.96 1307.15,82.47 1308.44,83.00 1309.75,82.19 1311.01,83.45 1310.20,84.76 1310.73,86.05" fill="#5b5868"/><circle cx="1305.9" cy="87.3" r="2.6" fill="#e9e8ee"/>
<path d="M1446.8,45.9 H1453.2 L1450,49 Z M1446.8,86.1 H1453.2 L1450,89.2 Z" fill="#2e2b40"/>
<rect x="1458" y="58" width="6.6" height="6.8" fill="#c6c4ce"/><rect x="1467.2" y="58" width="6.6" height="6.8" fill="#c6c4ce"/><path d="M1460.4,58 L1466,53.6 L1471.4,58 Z" fill="#c6c4ce"/><path d="M1470.2,55.6 A4.6,4.6 0 1 0 1466,58.6" fill="none" stroke="#c6c4ce" stroke-width="1.6"/><path d="M1468.6,50.6 L1472.8,52 L1469.8,55 Z" fill="#c6c4ce"/>
<rect x="1618.2" y="48.4" width="10" height="10" fill="#c6c4ce"/><circle cx="1628.7" cy="59.2" r="6.6" fill="#e9e8ee"/>
<polygon points="1634.25,58.42 1634.25,59.98 1632.93,60.29 1632.46,61.42 1633.17,62.57 1632.07,63.67 1630.92,62.96 1629.79,63.43 1629.48,64.75 1627.92,64.75 1627.61,63.43 1626.48,62.96 1625.33,63.67 1624.23,62.57 1624.94,61.42 1624.47,60.29 1623.15,59.98 1623.15,58.42 1624.47,58.11 1624.94,56.98 1624.23,55.83 1625.33,54.73 1626.48,55.44 1627.61,54.97 1627.92,53.65 1629.48,53.65 1629.79,54.97 1630.92,55.44 1632.07,54.73 1633.17,55.83 1632.46,56.98 1632.93,58.11" fill="#c6c4ce"/><circle cx="1628.7" cy="59.2" r="2.2" fill="#e9e8ee"/>
<rect x="1786" y="34.1" width="8" height="2.2" fill="#5b5868"/>
<rect x="1813.4" y="33.4" width="5" height="4" fill="none" stroke="#5b5868" stroke-width="1.2"/><path d="M1815.6,33.2 V31.6 H1820.6 V35.6 H1818.6" fill="none" stroke="#5b5868" stroke-width="1.2"/>
<path d="M1840.6,31.8 L1847.6,38.6 M1847.6,31.8 L1840.6,38.6" stroke="#5b5868" stroke-width="2"/>
<rect x="1802.2" y="49.2" width="29.6" height="23.5" fill="none" stroke="#5b5868" stroke-width="2"/><rect x="1802.2" y="49.2" width="29.6" height="4.8" fill="#5b5868"/><circle cx="1805.4" cy="51.5" r="0.9" fill="#e9e8ee"/><circle cx="1808" cy="51.5" r="0.9" fill="#e9e8ee"/><circle cx="1810.6" cy="51.5" r="0.9" fill="#e9e8ee"/>
<path d="M1812.9,100.2 H1819.3 L1816.1,103.3 Z" fill="#2e2b40"/>
<circle cx="1841.2" cy="11.7" r="5.2" fill="none" stroke="#5b5868" stroke-width="1.8"/><path d="M1845,15.6 L1850.4,20" stroke="#5b5868" stroke-width="2.4"/>
<path d="M1839.6,120.6 L1845,125.6 L1839.6,130.6" fill="none" stroke="#a3a1aa" stroke-width="1.8"/>
<path d="M1842,151.4 L1848.6,154.8 L1848.6,162.6 L1842,166.2 L1835.4,162.6 L1835.4,154.8 Z" fill="#eeeef0"/><path d="M1835.4,154.8 L1842,158.4 L1848.6,154.8 M1842,158.4 V166.2" fill="none" stroke="#36354a" stroke-width="1"/>
<rect x="1834" y="185" width="7" height="6.6" fill="#eeeef0"/><path d="M1846.4,184.4 L1850,191.4 H1842.8 Z" fill="#eeeef0"/><circle cx="1837.6" cy="197.2" r="3.4" fill="#eeeef0"/><path d="M1846.4,193.6 V200.6 M1842.9,197.1 H1849.9" stroke="#eeeef0" stroke-width="2.2"/>
</svg>
<div id="tbar" class="a"></div>
<div class="a" style="left:0;top:1004px;width:1px;height:24px;background:#9a9a9a"></div><div class="a" style="left:1px;top:1004px;width:1px;height:24px;background:#fff"></div><div class="a" style="left:1px;top:1004px;width:1824px;height:1px;background:#fafafa"></div>
<div class="b" style="left:10.0px;width:23.0px"></div>
<div class="b" style="left:33.0px;width:23.0px"></div>
<div class="b" style="left:56.0px;width:23.0px"></div>
<div class="b" style="left:79.0px;width:23.0px"></div>
<div class="b" style="left:102.0px;width:23.0px"></div>
<div class="b" style="left:125.0px;width:23.0px"></div>
<div class="b" style="left:148.0px;width:23.0px"></div>
<div class="b" style="left:217.0px;width:23.0px"></div>
<div class="b" style="left:240.0px;width:23.0px"></div>
<div class="b" style="left:263.0px;width:23.0px"></div>
<div class="b" style="left:286.0px;width:23.0px"></div>
<div class="b" style="left:332.0px;width:23.0px"></div>
<div class="b" style="left:355.0px;width:23.0px"></div>
<div class="b" style="left:378.0px;width:23.0px"></div>
<div class="b" style="left:401.0px;width:23.0px"></div>
<div class="b" style="left:456.0px;width:23.0px"></div>
<div class="a" style="left:547.5px;top:1006px;width:1px;height:21px;background:#a0a0a0"></div><div class="a" style="left:548.5px;top:1006px;width:1px;height:21px;background:#fff"></div>
<div class="sel" style="left:554.8px;width:94.8px"></div>
<div class="a" style="left:673.4px;top:1006px;width:1px;height:21px;background:#a0a0a0"></div><div class="a" style="left:674.4px;top:1006px;width:1px;height:21px;background:#fff"></div>
<div class="a" style="left:705.0px;top:1006px;width:1px;height:21px;background:#a0a0a0"></div><div class="a" style="left:706.0px;top:1006px;width:1px;height:21px;background:#fff"></div>
<div class="a" style="left:706px;top:1005px;width:1px;height:22px;background:#fff"></div>
<div class="a" style="left:842.5px;top:1006px;width:1px;height:21px;background:#a0a0a0"></div><div class="a" style="left:843.5px;top:1006px;width:1px;height:21px;background:#fff"></div>
<div class="b" style="left:852.0px;width:23.0px"></div>
<div class="b" style="left:875.0px;width:23.0px"></div>
<div class="b" style="left:898.0px;width:23.0px"></div>
<div class="b" style="left:921.0px;width:23.0px"></div>
<div class="b" style="left:944.0px;width:23.0px"></div>
<div class="b" style="left:967.0px;width:23.0px"></div>
<div class="b" style="left:990.0px;width:23.0px"></div>
<div class="a" style="left:1036.4px;top:1006px;width:1px;height:21px;background:#a0a0a0"></div><div class="a" style="left:1037.4px;top:1006px;width:1px;height:21px;background:#fff"></div>
<div class="b" style="left:1044.0px;width:23.0px"></div>
<div class="a" style="left:1090.4px;top:1006px;width:1px;height:21px;background:#a0a0a0"></div><div class="a" style="left:1091.4px;top:1006px;width:1px;height:21px;background:#fff"></div>
<div class="b" style="left:1098.0px;width:23.0px"></div>
<div class="b" style="left:1121.0px;width:23.0px"></div>
<div class="sel" style="left:1152.3px;width:81.5px"></div>
<div class="sel" style="left:1233.8px;width:129.5px"></div>
<div class="sel" style="left:1363.3px;width:157.2px"></div>
<div class="a" style="left:1521.0px;top:1006px;width:1px;height:21px;background:#a0a0a0"></div><div class="a" style="left:1522.0px;top:1006px;width:1px;height:21px;background:#fff"></div>
<div class="a" style="left:1825px;top:1004px;width:1px;height:25px;background:#c2c0d6"></div>
<svg class="a" style="left:0;top:0" width="1858" height="1050" viewBox="0 0 1858 1050"><defs><pattern id="hatchp" width="2" height="2" patternUnits="userSpaceOnUse"><rect width="2" height="2" fill="#e4e4e4"/><rect width="1" height="1" fill="#333"/><rect x="1" y="1" width="1" height="1" fill="#333"/></pattern></defs>
<rect x="5" y="1008" width="1.5" height="1.5" fill="#b8b8b8"/>
<rect x="5" y="1013" width="1.5" height="1.5" fill="#b8b8b8"/>
<rect x="5" y="1018" width="1.5" height="1.5" fill="#b8b8b8"/>
<rect x="5" y="1023" width="1.5" height="1.5" fill="#b8b8b8"/>
<path d="M17.9,1009 L17.9,1021 L20.9,1018.4 L23.1,1023 L25.3,1022 L23.3,1017.4 L27.1,1017.2 Z" fill="#5b5868"/>
<path d="M44.5,1010 L48.9,1022.4 L40.1,1022.4 Z" fill="#3f8a1c"/>
<rect x="63.2" y="1011.8" width="8.6" height="8.4" fill="#0a86d8"/>
<path d="M84.0,1011.5 H97.0 M84.0,1016 H97.0 M84.0,1020.5 H97.0 M87.0,1009.5 V1011.5 M94.0,1009.5 V1011.5 M90.5,1011.5 V1016 M87.0,1016 V1020.5 M94.0,1016 V1020.5 M90.5,1020.5 V1023" fill="none" stroke="#5b5868" stroke-width="1.4"/>
<circle cx="110.1" cy="1013" r="2.2" fill="#5b5868"/>
<circle cx="110.1" cy="1019.4" r="2.2" fill="#5b5868"/>
<circle cx="116.9" cy="1013" r="2.2" fill="#5b5868"/>
<circle cx="116.9" cy="1019.4" r="2.2" fill="#5b5868"/>
<line x1="130.9" y1="1022" x2="142.1" y2="1010" stroke="#5b5868" stroke-width="1.3"/>
<path d="M159.5,1008.8 L166.1,1012.2 L166.1,1020 L159.5,1023.6 L152.9,1020 L152.9,1012.2 Z" fill="#dbeafa" stroke="#5b5868" stroke-width="1.6"/><path d="M159.5,1015.6 L166.1,1012.2 L166.1,1020 L159.5,1023.6 Z" fill="#5b5868"/><path d="M152.9,1012.2 L159.5,1015.6" stroke="#5b5868" stroke-width="1.4"/>
<path d="M176.5,1013 H186.0 M176.5,1017.5 H186.0 M178.9,1009.5 V1020 M183.1,1009.5 V1020" fill="none" stroke="#5b5868" stroke-width="1.3"/><path d="M176.5,1022 H187.5" stroke="#5b5868" stroke-width="1.3" stroke-dasharray="1.5 1.3"/><path d="M188.0,1009.5 V1020" stroke="#5b5868" stroke-width="1.3" stroke-dasharray="1.5 1.8"/>
<path d="M199.5,1013 H207.0 M199.5,1017.5 H207.0 M201.5,1009.5 V1020 M205.1,1009.5 V1020" fill="none" stroke="#5b5868" stroke-width="1.3"/><path d="M199.5,1022 H210.5" stroke="#5b5868" stroke-width="1.3" stroke-dasharray="1.5 1.3"/><path d="M211.5,1009.5 V1020" stroke="#5b5868" stroke-width="1.3" stroke-dasharray="1.5 1.8"/><path d="M208.5,1009 V1020" stroke="#f08010" stroke-width="1.2"/>
<path d="M226.3,1017.2 L232.1,1009 L236.1,1012.8 L234.5,1014.4 L232.3,1012.6 L228.1,1018.8 Z" fill="#5b5868"/><path d="M221.5,1014.8 L225.7,1018.2 M221.3,1022.8 L225.7,1018.8 M226.5,1019.4 L225.9,1023.6 M227.5,1019.4 L230.1,1022.4 M222.1,1018.6 H225.1" stroke="#5b5868" stroke-width="1.1"/>
<path d="M247.3,1009.5 L254.5,1019.2 M255.7,1009.5 L248.5,1019.2" stroke="#5b5868" stroke-width="1.7" fill="none"/><circle cx="247.5" cy="1020.6" r="2" fill="none" stroke="#5b5868" stroke-width="1.4"/><circle cx="255.5" cy="1020.6" r="2" fill="none" stroke="#5b5868" stroke-width="1.4"/>
<rect x="266.9" y="1011" width="15.2" height="11.6" fill="none" stroke="#5b5868" stroke-width="1.5"/><path d="M266.9,1009.5 H282.1" stroke="#5b5868" stroke-width="1" stroke-dasharray="1 1"/>
<path d="M293.0,1010 V1015 M293.0,1017.4 V1022.4" stroke="#5b5868" stroke-width="1.6"/><rect x="293.5" y="1011" width="9" height="3" fill="#5b5868"/><rect x="293.5" y="1018.4" width="9" height="3" fill="#5b5868"/>
<path d="M315.0,1010 V1022" stroke="#5b5868" stroke-width="2.4" stroke-dasharray="2 1.2 5.6 1.2 2 9"/><rect x="316.5" y="1014.2" width="5.4" height="3.6" fill="#5b5868"/><path d="M322.9,1014.2 V1017.8 M324.5,1014.2 V1017.8 M326.1,1014.2 V1017.8 M327.7,1014.2 V1017.8" stroke="#5b5868" stroke-width="0.8"/>
<path d="M336.5,1012.6 V1017.5 Q336.5,1019.4 338.5,1019.4 H348.5 Q350.5,1019.4 350.5,1017.5 V1012.6" fill="none" stroke="#5b5868" stroke-width="1.8"/>
<rect x="359.9" y="1009.6" width="13.2" height="13.2" fill="#a9a7ae"/><path d="M368.3,1009.6 V1013.2 H361.7 V1022.8" fill="none" stroke="#f0f0f3" stroke-width="1.3"/><path d="M370.7,1009.6 V1015.6 H364.1 V1022.8" fill="none" stroke="#5b5868" stroke-width="1.7"/>
<path d="M389.5,1011.2 L396.1,1015 L389.5,1018.8 L382.9,1015 Z" fill="none" stroke="#5b5868" stroke-width="1.4"/><path d="M382.9,1017.4 L389.5,1021.2 L396.1,1017.4" fill="none" stroke="#5b5868" stroke-width="1.4"/>
<path d="M411.9,1022.5 L406.3,1018.2 L417.1,1010" fill="none" stroke="#5b5868" stroke-width="1.5"/><path d="M414.7,1009 L418.9,1012.6 M418.5,1009 L415.5,1012.4" stroke="#5b5868" stroke-width="1.1"/>
<rect x="437.9" y="1009" width="13.4" height="13.6" fill="#3f8a1c"/><path d="M442.7,1010 L445.5,1010 L448.9,1021.6 L439.1,1021.6 Z" fill="#f4f8f0"/><circle cx="447.9" cy="1012.2" r="1.8" fill="#f4f8f0"/>
<path d="M466.5,1010.6 L470.5,1022.6 L462.1,1022.6 Z" fill="#3f8a1c"/><circle cx="471.5" cy="1011.4" r="1.9" fill="#5b5868"/>
<rect x="483.3" y="1010" width="12.4" height="12.4" fill="none" stroke="#0a86d8" stroke-width="1.3"/><rect x="485.9" y="1012.6" width="7.2" height="7.2" fill="#0a86d8"/>
<rect x="482.5" y="1009.2" width="3.6" height="3.6" fill="#fff" stroke="#0a86d8" stroke-width="1"/>
<rect x="482.5" y="1019.6" width="3.6" height="3.6" fill="#fff" stroke="#0a86d8" stroke-width="1"/>
<rect x="492.9" y="1009.2" width="3.6" height="3.6" fill="#fff" stroke="#0a86d8" stroke-width="1"/>
<rect x="492.9" y="1019.6" width="3.6" height="3.6" fill="#fff" stroke="#0a86d8" stroke-width="1"/>
<rect x="507.8" y="1012" width="8.4" height="8.4" fill="none" stroke="#0a86d8" stroke-width="1.4"/>
<rect x="505.79999999999995" y="1010.0" width="3.2" height="3.2" fill="#fff" stroke="#0a86d8" stroke-width="1.1"/>
<rect x="505.79999999999995" y="1019.1999999999999" width="3.2" height="3.2" fill="#fff" stroke="#0a86d8" stroke-width="1.1"/>
<rect x="515.0" y="1010.0" width="3.2" height="3.2" fill="#fff" stroke="#0a86d8" stroke-width="1.1"/>
<rect x="515.0" y="1019.1999999999999" width="3.2" height="3.2" fill="#fff" stroke="#0a86d8" stroke-width="1.1"/>
<circle cx="534.1" cy="1014.4" r="4.2" fill="none" stroke="#5b5868" stroke-width="1.2"/><path d="M534.1,1012 V1014.4 H536.1" fill="none" stroke="#5b5868" stroke-width="1"/><path d="M534.9,1018.6 V1021 H537.5" fill="none" stroke="#5b5868" stroke-width="1"/><rect x="537.5" y="1019.6" width="4.8" height="2.6" fill="#5b5868"/>
<path d="M637.2,1013.6 L640.6,1017.6 L644.0,1013.6" fill="none" stroke="#4a4a4a" stroke-width="1.7"/>
<circle cx="660.9" cy="1015.8" r="6" fill="url(#hatchp)"/>
<rect x="684.3" y="1009.8" width="5.2" height="5" fill="#1818e0"/><path d="M691,1009.8 L691,1020.2 L693.6,1018 L695.6,1022.6 L697.8,1021.6 L695.8,1017.2 L699.2,1017 Z" fill="#333"/>
<rect x="847.5" y="1008" width="1.5" height="1.5" fill="#b8b8b8"/>
<rect x="847.5" y="1013" width="1.5" height="1.5" fill="#b8b8b8"/>
<rect x="847.5" y="1018" width="1.5" height="1.5" fill="#b8b8b8"/>
<rect x="847.5" y="1023" width="1.5" height="1.5" fill="#b8b8b8"/>
<rect x="859.1" y="1011.8" width="8.8" height="8.8" fill="none" stroke="#5b5868" stroke-width="1.3"/><path d="M859.1,1011.8 L867.9,1020.6 M867.9,1011.8 L859.1,1020.6" stroke="#5b5868" stroke-width="1.2"/>
<rect x="881.9" y="1011.8" width="9.2" height="8.8" fill="none" stroke="#5b5868" stroke-width="1.3"/>
<circle cx="909.5" cy="1016" r="4.8" fill="none" stroke="#5b5868" stroke-width="1.3"/>
<path d="M932.5,1011 L937.7,1019.6 L927.3,1019.6 Z" fill="none" stroke="#5b5868" stroke-width="1.3"/>
<path d="M950.5,1011.4 L960.5,1021 M960.5,1011.4 L950.5,1021" stroke="#5b5868" stroke-width="1.3"/>
<path d="M975.1,1020.4 H983.1 V1011 M979.1,1020.4 V1016.4 H983.1" fill="none" stroke="#5b5868" stroke-width="1.2"/>
<path d="M999.1,1010.4 H1006.1 L999.1,1022 H1006.1 Z" fill="none" stroke="#5b5868" stroke-width="1.3" stroke-linejoin="miter"/><path d="M994.9,1016.2 H1001.0" stroke="#5b5868" stroke-width="1" stroke-dasharray="1 1"/>
<path d="M1017.1999999999999,1018.6 L1023.8,1013.2 L1030.3999999999999,1018.6" fill="none" stroke="#5b5868" stroke-width="1.3"/>
<path d="M1051.9,1010.4 H1059.1 L1051.9,1022 H1059.1 Z" fill="none" stroke="#5b5868" stroke-width="1.3"/>
<path d="M1073,1021 L1082.6,1011.8 M1075.4,1011.6 H1082.8 V1019" fill="none" stroke="#5b5868" stroke-width="1.3"/>
<rect x="1104.5" y="1011" width="10" height="10" fill="#b9b8be"/><rect x="1107.5" y="1014" width="4" height="4" fill="#5b5868"/>
<rect x="1127.1" y="1010.6" width="11" height="11" fill="#9c9aa4"/>
<path d="M1126.3,1012.4 V1009.8 H1128.8999999999999" fill="none" stroke="#5b5868" stroke-width="1.3"/>
<path d="M1126.3,1019.6 V1022.2 H1128.8999999999999" fill="none" stroke="#5b5868" stroke-width="1.3"/>
<path d="M1138.7,1012.4 V1009.8 H1136.1000000000001" fill="none" stroke="#5b5868" stroke-width="1.3"/>
<path d="M1138.7,1019.6 V1022.2 H1136.1000000000001" fill="none" stroke="#5b5868" stroke-width="1.3"/>
<path d="M1221.4,1013.6 L1224.8,1017.6 L1228.2,1013.6" fill="none" stroke="#4a4a4a" stroke-width="1.7"/>
<path d="M1350.9,1013.6 L1354.3,1017.6 L1357.7,1013.6" fill="none" stroke="#4a4a4a" stroke-width="1.7"/>
<path d="M1508.1,1013.6 L1511.5,1017.6 L1514.9,1013.6" fill="none" stroke="#4a4a4a" stroke-width="1.7"/>
</svg>
<span class="t" style="left:90.1px;top:6.8px;color:#3b3750;font-size:12.5px;transform:scaleX(0.8676);">Сталь</span>
<span class="t" style="left:156.2px;top:6.8px;color:#3b3750;font-size:12.5px;transform:scaleX(0.9245);">Бетон</span>
<span class="t" style="left:223.2px;top:6.8px;color:#3b3750;font-size:12.5px;transform:scaleX(0.9565);">Правка</span>
<span class="t" style="left:299.3px;top:6.8px;color:#3b3750;font-size:12.5px;transform:scaleX(0.9150);">Вид</span>
<span class="t" style="left:355.0px;top:6.8px;color:#3b3750;font-size:12.5px;transform:scaleX(0.9683);">Чертежи и отчеты</span>
<span class="t" style="left:491.2px;top:6.8px;color:#3b3750;font-size:12.5px;transform:scaleX(0.9597);">Управление</span>
<span class="t" style="left:593.4px;top:6.8px;color:#3b3750;font-size:12.5px;transform:scaleX(0.9592);">Расчет и проектирование</span>
<span class="t" style="left:68.5px;top:85.8px;color:#3b3750;font-size:12.5px;transform:scaleX(0.9604);clip-path:inset(0 0 0 11.5px);">Отчеты</span>
<span class="t" style="left:142.6px;top:85.8px;color:#3b3750;font-size:12.5px;transform:scaleX(0.9471);">Организатор</span>
<span class="t" style="left:266.5px;top:41.8px;color:#3b3750;font-size:12.5px;transform:scaleX(0.8710);">Стадии</span>
<span class="t" style="left:266.5px;top:74.8px;color:#3b3750;font-size:12.5px;transform:scaleX(0.9247);">Проверка на</span>
<span class="t" style="left:266.5px;top:87.8px;color:#3b3750;font-size:12.5px;transform:scaleX(0.9348);">конфликты</span>
<span class="t" style="left:426.5px;top:34.8px;color:#3b3750;font-size:12.5px;transform:scaleX(0.9276);">Преобразовать</span>
<span class="t" style="left:426.5px;top:47.6px;color:#3b3750;font-size:12.5px;transform:scaleX(0.8937);">объекты IFC</span>
<span class="t" style="left:426.3px;top:81.8px;color:#3b3750;font-size:12.5px;transform:scaleX(0.9535);">Диспетчер разбивок</span>
<span class="t" style="left:552.5px;top:72.8px;color:#3b3750;font-size:12.5px;transform:scaleX(0.9305);">Блокиров</span>
<span class="t" style="left:572.6px;top:85.8px;color:#3b3750;font-size:12.5px;transform:scaleX(0.9638);">ки</span>
<span class="t" style="left:630.1px;top:31.8px;color:#3b3750;font-size:12.5px;transform:scaleX(0.8783);">Задания</span>
<span class="t" style="left:630.1px;top:51.7px;color:#3b3750;font-size:12.5px;transform:scaleX(0.9057);">Последовательности</span>
<span class="t" style="left:630.1px;top:71.6px;color:#3b3750;font-size:12.5px;transform:scaleX(0.9381);">Партии</span>
<span class="t" style="left:630.1px;top:91.6px;color:#3b3750;font-size:12.5px;transform:scaleX(0.8945);">Статус проекта</span>
<span class="t" style="left:803.6px;top:72.8px;color:#b4b2bd;font-size:12.5px;transform:scaleX(0.8910);">Расчетные и</span>
<span class="t" style="left:785.2px;top:85.8px;color:#b4b2bd;font-size:12.5px;transform:scaleX(0.9369);">проектные модели</span>
<span class="t" style="left:917.0px;top:72.8px;color:#b4b2bd;font-size:12.5px;transform:scaleX(0.9364);">Группы</span>
<span class="t" style="left:912.0px;top:85.8px;color:#b4b2bd;font-size:12.5px;transform:scaleX(0.9657);">нагрузок</span>
<span class="t" style="left:989.8px;top:85.8px;color:#3b3750;font-size:12.5px;transform:scaleX(0.9180);">Загрузить</span>
<span class="t" style="left:1083.9px;top:85.8px;color:#b4b2bd;font-size:12.5px;transform:scaleX(0.8515);">Узел</span>
<span class="t" style="left:1157.9px;top:41.7px;color:#b4b2bd;font-size:12.5px;transform:scaleX(0.8927);">Жесткая связь</span>
<span class="t" style="left:1157.9px;top:81.7px;color:#b4b2bd;font-size:12.5px;transform:scaleX(0.9120);">Объединить узлы</span>
<span class="t" style="left:1318.3px;top:34.8px;color:#3b3750;font-size:12.5px;transform:scaleX(0.9022);">Свойства расчета</span>
<span class="t" style="left:1318.3px;top:47.8px;color:#3b3750;font-size:12.5px;transform:scaleX(0.8535);">детали</span>
<span class="t" style="left:1318.3px;top:81.7px;color:#3b3750;font-size:12.5px;transform:scaleX(0.8983);">Загрузить свойства</span>
<span class="t" style="left:1478.6px;top:37.7px;color:#b4b2bd;font-size:12.5px;transform:scaleX(0.9124);">Сбросить</span>
<span class="t" style="left:1478.6px;top:50.7px;color:#b4b2bd;font-size:12.5px;transform:scaleX(0.9387);">редактирование</span>
<span class="t" style="left:1478.6px;top:63.7px;color:#b4b2bd;font-size:12.5px;transform:scaleX(0.9050);">выбранных деталей</span>
<span class="t" style="left:1638.6px;top:44.9px;color:#b4b2bd;font-size:12.5px;transform:scaleX(0.9171);">Получить расчетные</span>
<span class="t" style="left:1638.6px;top:58.0px;color:#b4b2bd;font-size:12.5px;transform:scaleX(0.8846);">свойства</span>
<span class="t" style="left:1803.8px;top:85.8px;color:#3b3750;font-size:12.5px;transform:scaleX(0.9569);">Окно</span>
<span class="t" style="left:1683.4px;top:7.0px;color:#a9a8ae;font-size:12.5px;transform:scaleX(0.9543);">Быстрый запуск</span>
<span class="t" style="left:1370.6px;top:1032.8px;color:#111;font-size:12.5px;transform:scaleX(0.9331);">0</span>
<span class="t" style="left:1410.5px;top:1032.8px;color:#111;font-size:12.5px;transform:scaleX(0.9599);clip-path:inset(0 4.5px 0 0);">Панорам</span>
<span class="t" style="left:1460.7px;top:1032.8px;color:#111;font-size:12.5px;transform:scaleX(0.9124);">Текущая стадия: 1, +8.050.</span>
<span class="t" style="left:1688.7px;top:1032.8px;color:#111;font-size:12.5px;transform:scaleX(0.9433);">1 + 0 выбрано объектов:</span>
<span class="t" style="left:560.1px;top:1009.9px;color:#111;font-size:12px;transform:scaleX(0.9742);">standard</span>
<span class="t" style="left:1157.2px;top:1009.9px;color:#111;font-size:12px;transform:scaleX(0.9290);">Авто</span>
<span class="t" style="left:1239.7px;top:1009.9px;color:#111;font-size:12px;transform:scaleX(0.9248);">Плоскость вида</span>
</body></html>
